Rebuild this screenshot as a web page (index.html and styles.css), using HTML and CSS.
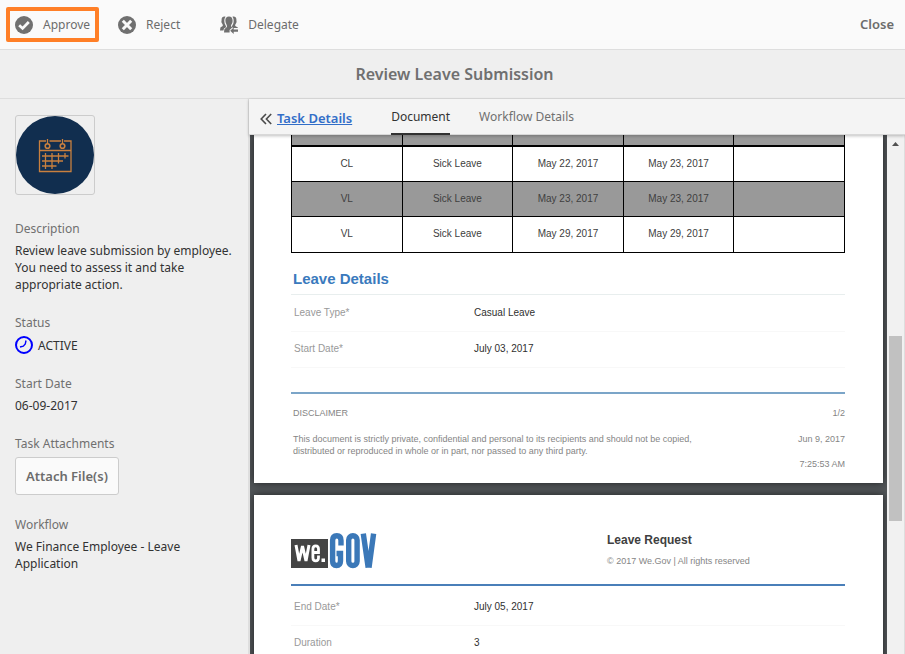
FILE: index.html
```html
<!DOCTYPE html>
<html lang="en">
<head>
<meta charset="utf-8">
<title>Review Leave Submission</title>
<link rel="stylesheet" href="styles.css">
</head>
<body>
<header class="toolbar">
  <button class="action action-highlight" type="button">
    <svg class="icon" viewBox="0 0 18 18" aria-hidden="true"><circle cx="9" cy="9" r="9" fill="#707070"/><path d="M4.2 9.2 7.6 12.400 13.800 6" fill="none" stroke="#fafafa" stroke-width="2.800"/></svg>
    Approve
  </button>
  <button class="action" type="button">
    <svg class="icon" viewBox="0 0 18 18" aria-hidden="true"><circle cx="9" cy="9" r="9" fill="#707070"/><path d="M4.800 4.800 13.200 13.200M13.200 4.800 4.800 13.200" fill="none" stroke="#fafafa" stroke-width="3"/></svg>
    Reject
  </button>
  <button class="action action-delegate" type="button">
    <svg class="icon" viewBox="0 0 18 18" aria-hidden="true">
      <g fill="#707070">
        <path d="M5.600.8C3.600 0 1.500 1.300 1.600 3.600 1.700 5.500.9 5.900 1.900 7.200 2.700 8.200 3 9.200 2.700 10L.4 11.500 0 14.500H3.400L4 12.600 6 11.200C6.500 9.800 4.500 8.500 4.400 6 4.200 3.800 4.500 2 5.600.8Z"/>
        <path d="M12.400.8C14.400 0 16.500 1.300 16.400 3.600 16.300 5.500 17.100 5.900 16.100 7.200 15.300 8.200 15 9.200 15.300 10L17.800 11.600 18 12H13.400L11.900 11.200C11.500 9.800 13.500 8.500 13.600 6 13.800 3.800 13.500 2 12.400.8Z"/>
        <path d="M9 .6C6.500.6 5.100 2.400 5.400 5 5.500 7.500 7.100 8.600 7 10.400 6.900 11.500 4.800 12.200 4.300 13.400L4 16.500H9.600V14L12.200 11.400C11 10.800 11 9.500 11.100 9 12.200 7.800 12.600 6.400 12.600 4.700 12.700 2.200 11.300.6 9 .6Z"/>
        <path d="M10.200 14.700 13.700 11.500V13.600H18V15.800H13.700V18Z"/>
      </g>
    </svg>
    Delegate
  </button>
  <button class="close" type="button">Close</button>
</header>
<h1 class="title">Review Leave Submission</h1>
<main class="main">
  <aside class="sidebar">
    <div class="thumb">
      <svg viewBox="0 0 78 78" role="img" aria-label="Calendar">
        <circle cx="39" cy="39" r="39" fill="#112e4f"/>
        <g fill="none" stroke="#c9803f" stroke-width="1.300">
          <path d="M30 25H23.500V55.500H55V25H48M33.500 25H45M23.500 34.500H55"/>
          <path d="M31.500 23V28M46.500 23V28M26 40H52.500M26 45H47M26 50H40.500M29.500 37V53M36 37V53M42.500 37V47.500M49 37V42.500"/>
          <circle cx="31.500" cy="30" r="2.300" stroke-width="1.600"/><circle cx="46.500" cy="30" r="2.300" stroke-width="1.600"/>
        </g>
      </svg>
    </div>
    <dl class="facts">
      <div class="fact"><dt>Description</dt><dd>Review leave submission by employee. You need to assess it and take appropriate action.</dd></div>
      <div class="fact"><dt>Status</dt><dd class="status"><svg class="icon" viewBox="0 0 18 18" aria-hidden="true"><circle cx="9" cy="9" r="8" fill="none" stroke="#00f" stroke-width="2"/><path d="M11 4.500 10.300 8 8.300 10.200 5 11" fill="none" stroke="#00f" stroke-width="1.400"/></svg>ACTIVE</dd></div>
      <div class="fact"><dt>Start Date</dt><dd>06-09-2017</dd></div>
      <div class="fact"><dt>Task Attachments</dt><dd><button class="attach" type="button">Attach File(s)</button></dd></div>
      <div class="fact"><dt>Workflow</dt><dd>We Finance Employee - Leave Application</dd></div>
    </dl>
  </aside>
  <section class="content">
    <nav class="tabs">
      <svg class="chevrons" viewBox="0 0 12 12" aria-hidden="true"><path d="M6 1 1.200 6 6 11M11.200 1 6.400 6 11.200 11" fill="none" stroke="#4b4b4b" stroke-width="1.600"/></svg>
      <a class="back" href="#">Task Details</a>
      <a class="tab tab-active" href="#">Document</a>
      <a class="tab" href="#">Workflow Details</a>
    </nav>
    <div class="viewer">
      <div class="pages">
        <article class="page page-first">
          <table class="leaves">
            <tbody>
              <tr class="cut"><td></td><td></td><td></td><td></td><td></td></tr>
              <tr><td>CL</td><td>Sick Leave</td><td>May 22, 2017</td><td>May 23, 2017</td><td></td></tr>
              <tr class="shade"><td>VL</td><td>Sick Leave</td><td>May 23, 2017</td><td>May 23, 2017</td><td></td></tr>
              <tr class="last"><td>VL</td><td>Sick Leave</td><td>May 29, 2017</td><td>May 29, 2017</td><td></td></tr>
            </tbody>
          </table>
          <h2 class="section-title">Leave Details</h2>
          <dl class="fields">
            <div class="field"><dt>Leave Type*</dt><dd>Casual Leave</dd></div>
            <div class="field"><dt>Start Date*</dt><dd>July 03, 2017</dd></div>
          </dl>
          <footer class="footer">
            <div class="footer-row"><span>DISCLAIMER</span><span>1/2</span></div>
            <div class="footer-row">
              <p class="legal">This document is strictly private, confidential and personal to its recipients and should not be copied, distributed or reproduced in whole or in part, nor passed to any third party.</p>
              <p class="stamp"><span>Jun 9, 2017</span><span>7:25:53 AM</span></p>
            </div>
          </footer>
        </article>
        <article class="page page-second">
          <header class="letterhead">
            <svg class="logo" viewBox="0 0 86 36" role="img" aria-label="we.GOV">
              <rect y="6" width="37" height="29" fill="#444"/>
              <g fill="none" stroke="#fff">
                <path d="M5 12 8 28 11.500 13 15 28 18 12" stroke-width="3"/>
                <path d="M22 19.500H27.500V16Q27.500 12.800 24.700 12.800T21.900 16V24.500Q21.900 27.800 24.700 27.800T27.500 24.500V22.500" stroke-width="2.800"/>
              </g>
              <rect x="30.500" y="25.500" width="3.500" height="3.500" fill="#fff"/>
              <g fill="none" stroke="#3b78b8" stroke-width="5.400">
                <path d="M50 12.500V7.500Q50 2.700 45.800 2.700T41.600 7.500V28Q41.600 32.500 45.500 32.500T49.500 28V20.500H45.500"/>
                <rect x="57.700" y="2.700" width="8.400" height="29.800" rx="4.200"/>
                <path d="M72.300 .6 77.200 34.600M82.600 .6 78 34.600"/>
              </g>
            </svg>
            <div class="letterhead-text"><h2>Leave Request</h2><p>© 2017 We.Gov | All rights reserved</p></div>
          </header>
          <dl class="fields fields-second">
            <div class="field"><dt>End Date*</dt><dd>July 05, 2017</dd></div>
            <div class="field"><dt>Duration</dt><dd>3</dd></div>
          </dl>
        </article>
      </div>
      <div class="scrollbar" aria-hidden="true">
        <svg class="scroll-up" viewBox="0 0 7 4"><path d="M0 4 3.500 0 7 4Z" fill="#505050"/></svg>
        <div class="scroll-thumb"></div>
      </div>
    </div>
  </section>
</main>
</body>
</html>
```
FILE: styles.css
```css
* { box-sizing: border-box; }
html, body { height: 100%; }
body {
  margin: 0;
  display: flex;
  flex-direction: column;
  overflow: hidden;
  background: #efefef;
  color: #323232;
  font: 12px/17px "Noto Sans", "Liberation Sans", sans-serif;
}
h1, h2, p, dl, dd { margin: 0; }
button { font: inherit; color: inherit; cursor: pointer; }
.icon { width: 18px; height: 18px; flex: none; }

.toolbar {
  display: flex;
  align-items: center;
  flex: none;
  height: 50px;
  padding: 0 11px 0 6px;
  background: #fafafa;
  border-bottom: 1px solid #dedede;
  color: #6c6c6c;
}
.action {
  display: flex;
  align-items: center;
  gap: 10px;
  height: 35px;
  margin-right: 15px;
  padding: 0 5px;
  border: 4px solid transparent;
  border-radius: 2px;
  background: none;
}
.action-highlight { border-color: #ff7f27; margin-right: 10px; }
.action-delegate { margin-left: 7px; }
.close, .attach, .back { font-size: 13px; font-weight: 600; }
.close {
  margin-left: auto;
  padding: 0;
  border: 0;
  background: none;
}
.title {
  flex: none;
  height: 49px;
  border-bottom: 1px solid #dedede;
  color: #707070;
  text-align: center;
  font-size: 16px;
  font-weight: 600;
  line-height: 48px;
  padding-left: 4px;
}

.main { display: flex; flex: 1; min-height: 0; }
.sidebar { flex: none; width: 248px; padding: 16px 15px; }
.thumb {
  width: 80px;
  height: 80px;
  border: 1px solid #ccc;
  border-radius: 3px;
}
.thumb svg { display: block; }
.facts { display: flex; flex-direction: column; gap: 21px; margin-top: 25px; }
.fact dt { color: #707070; margin-bottom: 5px; }
.status { display: flex; align-items: center; gap: 5px; }
.attach {
  display: block;
  height: 38px;
  padding: 0 10px;
  border: 1px solid #ccc;
  border-radius: 3px;
  background: #fafafa;
  color: #6c6c6c;
}

.content {
  flex: 1;
  min-width: 0;
  display: flex;
  flex-direction: column;
  border-left: 1px solid #dedede;
}
.tabs {
  display: flex;
  align-items: center;
  flex: none;
  height: 36px;
  padding-left: 11px;
  background: #f4f4f4;
  border-bottom: 1px solid #d8d8d8;
  z-index: 1;
  box-shadow: 0 1px 3px rgba(0, 0, 0, .25);
}
.chevrons { width: 12px; height: 12px; margin-right: 5px; margin-top: 4px; }
.back { color: #326ec8; margin-right: 39px; margin-top: 4px; }
.tab {
  height: 36px;
  margin-right: 29px;
  color: #707070;
  line-height: 36px;
  text-decoration: none;
}
.tab-active { color: #323232; border-bottom: 2px solid #323232; }

.viewer { display: flex; flex: 1; min-height: 0; border-left: 1px solid #dedede; border-right: 1px solid #dedede; background: #525659; }
.pages { flex: 1; min-width: 0; overflow: hidden; padding: 0 4px; font-family: "Liberation Sans", Arial, sans-serif; }
.page {
  background: #fff;
  padding: 0 38px 0 37px;
  box-shadow: 0 0 8px rgba(0, 0, 0, .6);
  font-size: 10px;
  line-height: 12px;
}
.page-first { height: 348px; margin-bottom: 12px; display: flex; flex-direction: column; }
.leaves { width: 100%; border-collapse: collapse; table-layout: fixed; }
.leaves td {
  height: 35px;
  padding: 0;
  border: 1px solid #000;
  text-align: center;
  color: #404040;
}
.leaves .cut td { height: 11px; border-top: 0; border-bottom-width: 2px; background: #999; }
.leaves .shade td { background: #999; }
.leaves .last td { height: 36px; }
.section-title { padding: 17px 2px 6px; color: #3a7abd; font-size: 15px; line-height: 18px; border-bottom: 1px solid #e8eeee; }
.fields { padding-top: 1px; }
.field { display: grid; grid-template-columns: 180px 1fr; height: 36px; padding: 11px 3px; border-bottom: 1px solid #f8f8f8; }
.field dt { color: #999; }
.field dd { color: #303030; }
.footer {
  margin-top: 24px;
  padding: 13px 0 0 2px;
  border-top: 2px solid #7ba5c8;
  color: #858585;
  font-size: 9px;
}
.footer-row { display: flex; justify-content: space-between; margin-bottom: 14px; }
.legal { max-width: 410px; }
.stamp { display: flex; flex-direction: column; gap: 13px; text-align: right; }
.page-second { height: 400px; }
.letterhead { display: flex; justify-content: space-between; padding: 38px 0 15px; border-bottom: 2px solid #4a7fb9; }
.logo { width: 86px; height: 36px; }
.letterhead-text { width: 238px; color: #858585; font-size: 9px; }
.letterhead-text h2 { margin-bottom: 8px; color: #404040; font-size: 12px; line-height: 14px; }
.fields-second { padding-top: 4px; }

.scrollbar { flex: none; width: 17px; padding: 0 2px; background: #f1f1f1; }
.scroll-up { display: block; width: 7px; height: 4px; margin: 7px auto 190px; }
.scroll-thumb { height: 185px; background: #c1c1c1; }
```
